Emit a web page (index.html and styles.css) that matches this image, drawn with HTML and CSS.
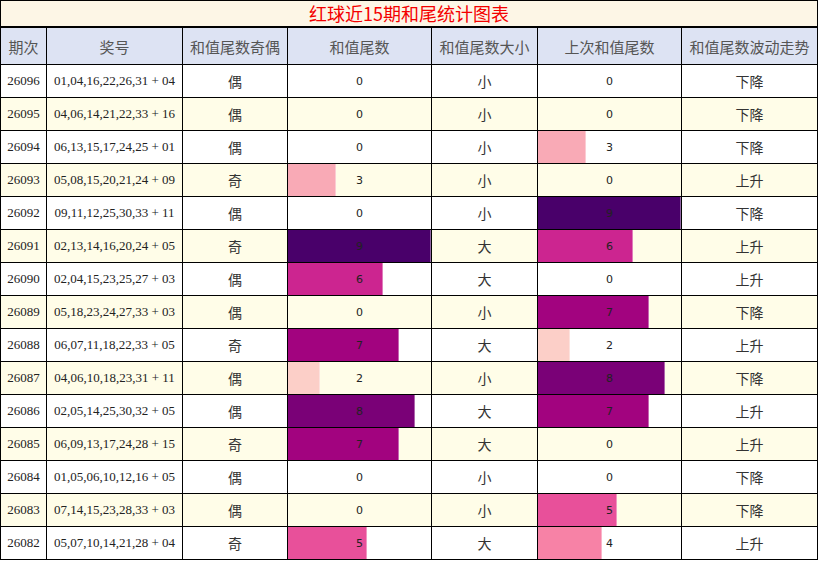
FILE: index.html
```html
<!DOCTYPE html>
<html lang="zh">
<head>
<meta charset="utf-8">
<title>红球近15期和尾统计图表</title>
<link rel="stylesheet" href="styles.css">
</head>
<body>
<div class="chart">
  <div class="title">红球近15期和尾统计图表</div>
  <div class="th">期次</div>
  <div class="th">奖号</div>
  <div class="th">和值尾数奇偶</div>
  <div class="th">和值尾数</div>
  <div class="th">和值尾数大小</div>
  <div class="th">上次和值尾数</div>
  <div class="th">和值尾数波动走势</div>
</div>
<script src="app.js"></script>
</body>
</html>
```
FILE: styles.css
```css
html, body {
  margin: 0;
  padding: 0;
  background: #fff;
}
.chart {
  display: grid;
  grid-template-columns: 45px 135px 104px 143px 105px 143px 135px;
  grid-template-rows: 26px 36px repeat(15, 32px);
  gap: 1px;
  padding: 1px;
  background: #000;
  width: 816px;
  font-family: "Noto Sans CJK SC", "Noto Sans", sans-serif;
}
.title {
  grid-column: 1 / -1;
  background: #fdf6e6;
  border-bottom: 1px solid #000;
  color: #f40000;
  font-size: 18px;
  line-height: 25px;
  text-align: center;
}
.th {
  background: #dde3f3;
  color: #555;
  font-size: 15px;
  display: flex;
  align-items: center;
  justify-content: center;
}
.td {
  background: #fff;
  display: flex;
  align-items: center;
  justify-content: center;
  color: #333;
  font-size: 14px;
}
.td.alt {
  background: #fffde8;
}
.num {
  font-family: "Liberation Serif", serif;
  font-size: 13px;
  color: #222;
}
.bar-cell {
  display: grid;
  grid-template-columns: 100%;
  grid-template-rows: 100%;
  justify-content: stretch;
  align-content: stretch;
  align-items: stretch;
  justify-items: start;
}
.bar {
  grid-area: 1 / 1;
  height: 100%;
  box-shadow: inset -1px 0 0 rgba(255,255,255,0.4);
}
.val {
  grid-area: 1 / 1;
  justify-self: stretch;
  align-self: center;
  text-align: center;
  font-family: "DejaVu Sans", sans-serif;
  font-size: 11px;
  color: #222;
}
.c2 { background: #fccfc8; }
.c3 { background: #f9aab6; }
.c4 { background: #f782a6; }
.c5 { background: #e8509a; }
.c6 { background: #cc2590; }
.c7 { background: #a2037f; }
.c8 { background: #7a0177; }
.c9 { background: #49006a; }
```
FILE: app.js
```js
const rows = [
  ["26096","01,04,16,22,26,31 + 04","偶",0,"小",0,"下降"],
  ["26095","04,06,14,21,22,33 + 16","偶",0,"小",0,"下降"],
  ["26094","06,13,15,17,24,25 + 01","偶",0,"小",3,"下降"],
  ["26093","05,08,15,20,21,24 + 09","奇",3,"小",0,"上升"],
  ["26092","09,11,12,25,30,33 + 11","偶",0,"小",9,"下降"],
  ["26091","02,13,14,16,20,24 + 05","奇",9,"大",6,"上升"],
  ["26090","02,04,15,23,25,27 + 03","偶",6,"大",0,"上升"],
  ["26089","05,18,23,24,27,33 + 03","偶",0,"小",7,"下降"],
  ["26088","06,07,11,18,22,33 + 05","奇",7,"大",2,"上升"],
  ["26087","04,06,10,18,23,31 + 11","偶",2,"小",8,"下降"],
  ["26086","02,05,14,25,30,32 + 05","偶",8,"大",7,"上升"],
  ["26085","06,09,13,17,24,28 + 15","奇",7,"大",0,"上升"],
  ["26084","01,05,06,10,12,16 + 05","偶",0,"小",0,"下降"],
  ["26083","07,14,15,23,28,33 + 03","偶",0,"小",5,"下降"],
  ["26082","05,07,10,14,21,28 + 04","奇",5,"大",4,"上升"]
];
const chart = document.querySelector(".chart");
function cell(cls, alt) {
  const d = document.createElement("div");
  d.className = "td " + cls + (alt ? " alt" : "");
  chart.appendChild(d);
  return d;
}
function barCell(v, alt) {
  const d = cell("bar-cell", alt);
  if (v > 0) {
    const b = document.createElement("div");
    b.className = "bar c" + v;
    b.style.width = (v / 9 * 143).toFixed(1) + "px";
    d.appendChild(b);
  }
  const t = document.createElement("div");
  t.className = "val";
  t.textContent = v;
  d.appendChild(t);
}
rows.forEach((r, i) => {
  const alt = i % 2 === 1;
  cell("num", alt).textContent = r[0];
  cell("num", alt).textContent = r[1];
  cell("", alt).textContent = r[2];
  barCell(r[3], alt);
  cell("", alt).textContent = r[4];
  barCell(r[5], alt);
  cell("", alt).textContent = r[6];
});
```
